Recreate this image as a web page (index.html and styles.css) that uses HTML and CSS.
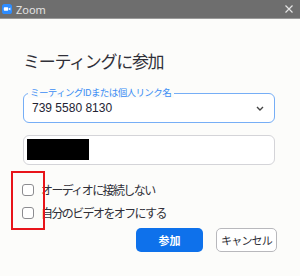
FILE: index.html
```html
<!DOCTYPE html>
<html lang="ja">
<head>
  <meta charset="UTF-8" />
  <meta name="viewport" content="width=device-width, initial-scale=1.0"/>
  <title>Zoom</title>
  <link rel="stylesheet" href="styles.css">
</head>
<body>
  <div class="titlebar">
    <svg class="app-icon" width="10" height="10" viewBox="0 0 10 10">
      <rect width="10" height="10" rx="2.6" fill="#2d8cff"/>
      <rect x="1.8" y="3.2" width="4.4" height="3.6" rx="0.7" fill="#fff"/>
      <path d="M6.6 4.8 L8.4 3.5 V6.5 L6.6 5.2 Z" fill="#fff"/>
    </svg>
    <span class="app-name">Zoom</span>
    <svg class="close" width="8" height="8" viewBox="0 0 8 8">
      <path d="M0.5 0.5 L7.5 7.5 M7.5 0.5 L0.5 7.5" stroke="#e4e4e4" stroke-width="1.2"/>
    </svg>
  </div>

  <div class="dialog">
    <h1>ミーティングに参加</h1>

    <div class="field field-active">
      <span class="field-label">ミーティングIDまたは個人リンク名</span>
      <span class="field-value">739 5580 8130</span>
      <svg class="chevron" width="8" height="5" viewBox="0 0 8 5">
        <path d="M1 1 L4 4 L7 1" fill="none" stroke="#444" stroke-width="1.4"/>
      </svg>
    </div>

    <div class="field">
      <span class="redacted"></span>
    </div>

    <div class="options">
      <label class="option"><span class="checkbox"></span>オーディオに接続しない</label>
      <label class="option"><span class="checkbox"></span>自分のビデオをオフにする</label>
      <div class="highlight"></div>
    </div>

    <div class="actions">
      <button class="btn btn-primary">参加</button>
      <button class="btn btn-cancel">キャンセル</button>
    </div>
  </div>
</body>
</html>
```

FILE: styles.css
```css
html, body {
  margin: 0;
  width: 300px;
  height: 276px;
  overflow: hidden;
}

body {
  font-family: "Noto Sans CJK JP", "Noto Sans", sans-serif;
  background-color: #fcfcfa;
  color: #232333;
}

.titlebar {
  height: 19px;
  background-color: #6e6e6e;
  border-bottom: 1px solid #9a9a9a;
  box-sizing: border-box;
  display: flex;
  align-items: center;
  padding: 0 7px 0 2px;
}

.app-icon {
  display: block;
}

.app-name {
  font-family: "Noto Sans", sans-serif;
  font-size: 11px;
  color: #e2e2e2;
  margin-left: 4px;
  line-height: 1;
}

.close {
  display: block;
  margin-left: auto;
}

.dialog {
  padding: 0 25px 0 23px;
}

h1 {
  margin: 32px 0 0;
  font-size: 17px;
  font-weight: normal;
  line-height: 20px;
  letter-spacing: -1.3px;
  color: #303038;
}

.field {
  position: relative;
  height: 28px;
  border: 1px solid #d4d4d8;
  border-radius: 6px;
  background-color: #fff;
  display: flex;
  align-items: center;
  padding: 0 10px 0 3px;
  margin-top: 12px;
}

.field-active {
  margin-top: 22px;
  border: 1.5px solid #76aef6;
  padding-left: 8px;
}

.field-label {
  position: absolute;
  top: -8px;
  left: 4px;
  padding: 0 3px 0 2px;
  background-color: #fcfcfa;
  font-size: 9.5px;
  line-height: 12px;
  letter-spacing: -0.6px;
  color: #3b8df5;
}

.field-value {
  font-family: "Liberation Sans", sans-serif;
  font-size: 12px;
  color: #232333;
}

.chevron {
  display: block;
  margin-left: auto;
}

.redacted {
  display: block;
  width: 62px;
  height: 21px;
  margin-top: -2px;
  background-color: #000;
}

.options {
  position: relative;
  margin-top: 18px;
  display: flex;
  flex-direction: column;
  gap: 9px;
}

.option {
  display: flex;
  align-items: center;
  font-size: 12px;
  line-height: 14px;
  letter-spacing: -1.6px;
  color: #303038;
}

.checkbox {
  width: 10px;
  height: 10px;
  border: 1px solid #8c8c90;
  border-radius: 3px;
  background-color: #fff;
  margin: 0 7px 0 -1px;
}

.highlight {
  position: absolute;
  left: -12px;
  top: -12px;
  width: 30px;
  height: 55px;
  border: 2px solid #e8141a;
}

.actions {
  display: flex;
  justify-content: flex-end;
  gap: 13px;
  margin-top: 8px;
  margin-right: -2px;
}

.btn {
  height: 24px;
  border-radius: 5px;
  font-family: "Noto Sans CJK JP", sans-serif;
  font-size: 11px;
  padding: 0;
  cursor: pointer;
}

.btn-primary {
  width: 67px;
  background-color: #0e71eb;
  border: none;
  color: #fff;
  font-weight: bold;
}

.btn-cancel {
  width: 61px;
  background-color: #fff;
  border: 1px solid #b8b8bc;
  color: #303038;
  letter-spacing: -0.8px;
}
```
